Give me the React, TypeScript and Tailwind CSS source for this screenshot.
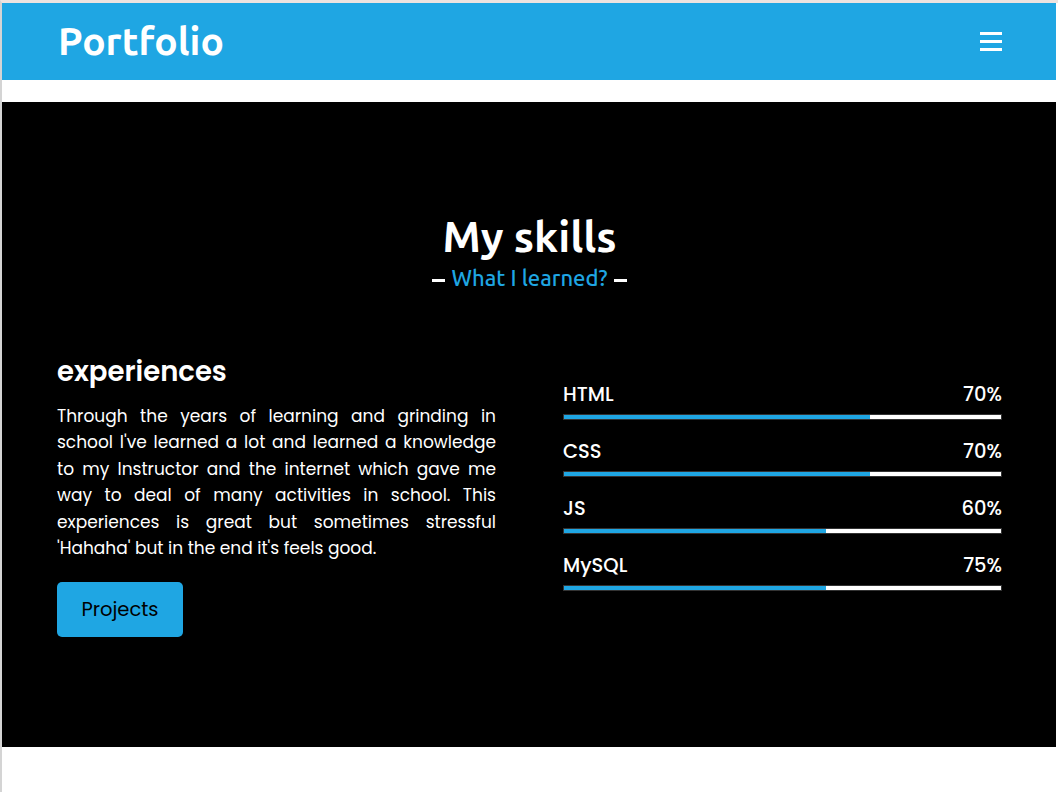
import React from "react";

const skills = [
  { name: "HTML", label: "70%", fill: 70 },
  { name: "CSS", label: "70%", fill: 70 },
  { name: "JS", label: "60%", fill: 60 },
  { name: "MySQL", label: "75%", fill: 60 },
];

const head = { fontFamily: "Ubuntu, 'Open Sans', 'Noto Sans', sans-serif" };
const body = { fontFamily: "Poppins, Inter, 'Noto Sans', sans-serif" };

const Navbar = () => (
  <header className="flex h-[77px] items-center justify-between bg-[#1fa6e3] pl-14 pr-[54px]">
    <h1 className="text-[39px] font-bold text-white" style={head}>
      Portfolio
    </h1>
    {/* hamburger */}
    <button className="flex w-[22px] flex-col gap-[5px]">
      <span className="h-[3px] w-full bg-white" />
      <span className="h-[3px] w-full bg-white" />
      <span className="h-[3px] w-full bg-white" />
    </button>
  </header>
);

const SkillBar = ({ name, label, fill }: { name: string; label: string; fill: number }) => (
  <div className="mb-[18px]">
    <div className="flex justify-between text-[19.5px] font-medium leading-[28px] text-white" style={body}>
      <span>{name}</span>
      <span>{label}</span>
    </div>
    <div className="mt-[5px] h-[6px] w-full border border-[#333] bg-white">
      <div className="h-full bg-[#1fa6e3]" style={{ width: `${fill}%` }} />
    </div>
  </div>
);

export default function App() {
  return (
    <div className="min-h-[792px] border-t-[3px] border-l-2 border-t-[#ede3e0] border-l-[#d4d4d4] bg-white pr-[2px]">
      <Navbar />
      <div className="h-[22px]" />

      {/* Skills */}
      <section className="flex h-[645px] flex-col bg-black pl-[55px] pr-[54px] pt-[111px]">
        <div className="flex flex-col items-center">
          <h2 className="text-[43px] font-bold leading-[46px] text-white" style={head}>
            My skills
          </h2>
          <div className="mt-[2px] flex items-center gap-[7px] text-[22px] font-medium" style={head}>
            <span className="mt-[6px] h-[3px] w-[13px] bg-white" />
            <span className="text-[#1fa6e3]">What I learned?</span>
            <span className="mt-[6px] h-[3px] w-[13px] bg-white" />
          </div>
        </div>

        <div className="mt-[60px] flex gap-[67px]">
          <div className="w-[439px] shrink-0">
            <h3 className="text-[27.5px] font-semibold leading-[36px] text-white" style={body}>
              experiences
            </h3>
            <p className="mt-[13px] text-justify text-[17px] leading-[26.4px] text-white" style={body}>
              Through the years of learning and grinding in school I've learned a lot and learned a
              knowledge to my Instructor and the internet which gave me way to deal of many activities
              in school. This experiences is great but sometimes stressful 'Hahaha' but in the end it's
              feels good.
            </p>
            <button
              className="mt-[21px] h-[55px] w-[126px] rounded-[5px] bg-[#1fa6e3] text-[19.5px] text-black"
              style={body}
            >
              Projects
            </button>
          </div>

          <div className="w-[439px] shrink-0 pt-[27px]">
            {skills.map((s) => (
              <SkillBar key={s.name} {...s} />
            ))}
          </div>
        </div>
      </section>
    </div>
  );
}
